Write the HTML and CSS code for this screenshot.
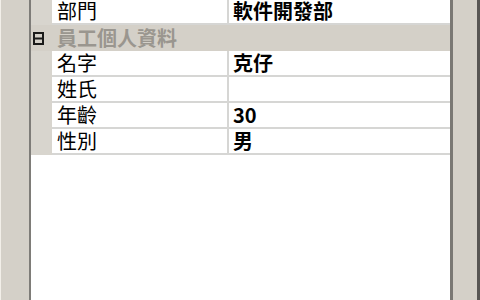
FILE: index.html
```html
<!DOCTYPE html>
<html>
<head>
<meta charset="utf-8">
<link rel="stylesheet" href="styles.css">
</head>
<body>
<div class="frame">
  <div class="side-left"></div>
  <div class="grid">
    <div class="row first">
      <div class="gutter"></div>
      <div class="cell name">部門</div>
      <div class="sep"></div>
      <div class="cell value">軟件開發部</div>
    </div>
    <div class="category">
      <div class="gutter cat-gutter">
        <svg class="toggle" width="11" height="13" viewBox="0 0 11 13"><rect x="1" y="1" width="9" height="11" fill="none" stroke="#1a1a1a" stroke-width="2"/><line x1="1" y1="6.5" x2="10" y2="6.5" stroke="#1a1a1a" stroke-width="2"/></svg>
      </div>
      <div class="cat-label">員工個人資料</div>
    </div>
    <div class="row">
      <div class="gutter"></div>
      <div class="cell name">名字</div>
      <div class="sep"></div>
      <div class="cell value">克仔</div>
    </div>
    <div class="row">
      <div class="gutter"></div>
      <div class="cell name">姓氏</div>
      <div class="sep"></div>
      <div class="cell value"></div>
    </div>
    <div class="row">
      <div class="gutter"></div>
      <div class="cell name">年齡</div>
      <div class="sep"></div>
      <div class="cell value">30</div>
    </div>
    <div class="row">
      <div class="gutter"></div>
      <div class="cell name">性別</div>
      <div class="sep"></div>
      <div class="cell value">男</div>
    </div>
    <div class="empty"></div>
  </div>
  <div class="side-right"></div>
</div>
</body>
</html>
```
FILE: styles.css
```css
html, body {
  margin: 0;
  padding: 0;
  width: 480px;
  height: 300px;
  overflow: hidden;
  background: #d4d0c8;
}
.frame {
  display: flex;
  width: 480px;
  height: 300px;
  font-family: "Noto Sans CJK TC", "Noto Sans", sans-serif;
  font-size: 20px;
  color: #000;
}
.side-left {
  width: 28px;
  border-left: 1px solid #f2efe9;
  border-right: 2px solid #7e7c78;
  background: #d4d0c8;
  flex: none;
}
.grid {
  width: 419px;
  flex: none;
  display: flex;
  flex-direction: column;
  background: #fff;
}
.row {
  display: grid;
  grid-template-columns: 21px 175px 2px 1fr;
  height: 26px;
}
.row.first {
  height: 25px;
}
.gutter {
  background: #d8d5ce;
}
.cell {
  background: #fff;
  border-bottom: 2px solid #d6d6d4;
  line-height: 23px;
  white-space: nowrap;
}
.row.first .cell {
  line-height: 22px;
}
.name {
  padding-left: 5px;
}
.value {
  padding-left: 4px;
  font-weight: 700;
}
.sep {
  background: #d6d6d4;
}
.category {
  display: flex;
  height: 26px;
  background: #d4d0c8;
}
.cat-gutter {
  width: 21px;
  background: transparent;
  display: flex;
  align-items: center;
  padding-left: 2px;
  box-sizing: border-box;
}
.toggle {
  display: block;
}
.cat-label {
  padding-left: 5px;
  line-height: 26px;
  font-weight: 700;
  color: #9a968f;
}
.empty {
  flex: 1;
  background: #fff;
}
.side-right {
  flex: 1;
  border-left: 3px solid #7a7874;
  border-right: 3px solid #585654;
  background: #d4d0c8;
}
```
